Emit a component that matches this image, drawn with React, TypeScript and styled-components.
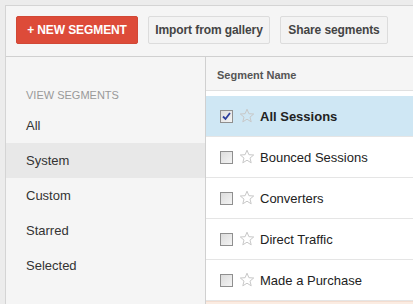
import React from 'react'
import styled, { createGlobalStyle, css } from 'styled-components'

const GlobalStyle = createGlobalStyle`
  html, body {
    margin: 0;
    padding: 0;
    background: #ececec;
    font-family: 'Liberation Sans', Arial, sans-serif;
  }
`

const Page = styled.div`
  padding: 5px 0 0 5px;
  height: 304px;
  box-sizing: border-box;
  overflow: hidden;
`

const Panel = styled.div`
  background: #f5f5f5;
  border-top: 1px solid #d4d4d4;
  border-left: 1px solid #d4d4d4;
  height: 100%;
  display: flex;
  flex-direction: column;
`

const Toolbar = styled.div`
  display: flex;
  gap: 10px;
  padding: 10px 10px 12px;
  border-bottom: 1px solid #d0d0d0;
`

const Button = styled.button<{ primary?: boolean; $w: number }>`
  flex: none;
  width: ${({ $w }) => $w}px;
  white-space: nowrap;
  height: 28px;
  padding: 0;
  font-family: inherit;
  font-size: 12px;
  font-weight: bold;
  letter-spacing: -0.1px;
  border-radius: 2px;
  cursor: pointer;
  ${({ primary }) =>
    primary
      ? css`
          background: #dd4b39;
          border: 1px solid #d14836;
          color: #fff;
        `
      : css`
          background: #f3f3f3;
          border: 1px solid #dcdcdc;
          color: #444;
        `}
`

const Body = styled.div`
  flex: 1;
  display: grid;
  grid-template-columns: 200px 1fr;
  min-height: 0;
`

const Sidebar = styled.div`
  border-right: 1px solid #d0d0d0;
  padding-top: 31px;
`

const SidebarLabel = styled.div`
  font-size: 11px;
  line-height: 14px;
  color: #999;
  padding-left: 20px;
  margin-bottom: 6px;
`

const SidebarItem = styled.div<{ active?: boolean }>`
  height: 35px;
  line-height: 36px;
  padding-left: 20px;
  font-size: 13px;
  color: #333;
  background: ${({ active }) => (active ? '#e8e8e8' : 'transparent')};
`

const Main = styled.div`
  display: flex;
  flex-direction: column;
  background: #fff;
`

const HeaderCell = styled.div`
  height: 33px;
  line-height: 36px;
  padding-left: 11px;
  background: #f5f5f5;
  border-bottom: 1px solid #e0e0e0;
  font-size: 11px;
  font-weight: bold;
  color: #555;
`

const List = styled.div`
  padding-top: 5px;
  flex: 1;
`

const Row = styled.div<{ selected?: boolean }>`
  height: 40px;
  display: flex;
  align-items: center;
  padding-left: 14px;
  border-bottom: 1px solid #e5e5e5;
  background: ${({ selected }) => (selected ? '#cfe7f4' : '#fff')};
  font-size: 13px;
  color: #222;
  font-weight: ${({ selected }) => (selected ? 'bold' : 'normal')};
`

const Footer = styled.div`
  height: 6px;
  background: #fbece2;
  border-top: 1px solid #f3ddd0;
`

const Box = styled.span`
  width: 11px;
  height: 11px;
  border: 1px solid #8f8f8f;
  background: linear-gradient(135deg, #dcdcdc, #f4f4f4);
  display: inline-flex;
  align-items: center;
  justify-content: center;
  margin-right: 6px;
`

const StarIcon = styled.svg`
  width: 16px;
  height: 16px;
  margin-right: 5px;
  margin-top: -1px;
`

function Checkbox({ checked }: { checked?: boolean }) {
  return (
    <Box>
      {checked && (
        <svg width="9" height="9" viewBox="0 0 9 9">
          <path d="M1 4.5 L3.5 7 L8 1" fill="none" stroke="#2c3e9c" strokeWidth="1.8" />
        </svg>
      )}
    </Box>
  )
}

function Star() {
  return (
    <StarIcon viewBox="0 0 16 16">
      <path
        d="M8 1.2 L9.9 5.7 L14.7 6 L11 9.1 L12.2 13.8 L8 11.2 L3.8 13.8 L5 9.1 L1.3 6 L6.1 5.7 Z"
        fill="none"
        stroke="#c8c8c8"
        strokeWidth="1"
        strokeLinejoin="round"
      />
    </StarIcon>
  )
}

const views = ['All', 'System', 'Custom', 'Starred', 'Selected']
const segments = ['All Sessions', 'Bounced Sessions', 'Converters', 'Direct Traffic', 'Made a Purchase']

export default function App() {
  return (
    <>
      <GlobalStyle />
      <Page>
        <Panel>
          <Toolbar>
            <Button primary $w={122}>+ NEW SEGMENT</Button>
            <Button $w={122}>Import from gallery</Button>
            <Button $w={108}>Share segments</Button>
          </Toolbar>
          <Body>
            <Sidebar>
              <SidebarLabel>VIEW SEGMENTS</SidebarLabel>
              {views.map((v) => (
                <SidebarItem key={v} active={v === 'System'}>
                  {v}
                </SidebarItem>
              ))}
            </Sidebar>
            <Main>
              <HeaderCell>Segment Name</HeaderCell>
              <List>
                {segments.map((s, i) => (
                  <Row key={s} selected={i === 0}>
                    <Checkbox checked={i === 0} />
                    <Star />
                    {s}
                  </Row>
                ))}
                <Footer />
              </List>
            </Main>
          </Body>
        </Panel>
      </Page>
    </>
  )
}
